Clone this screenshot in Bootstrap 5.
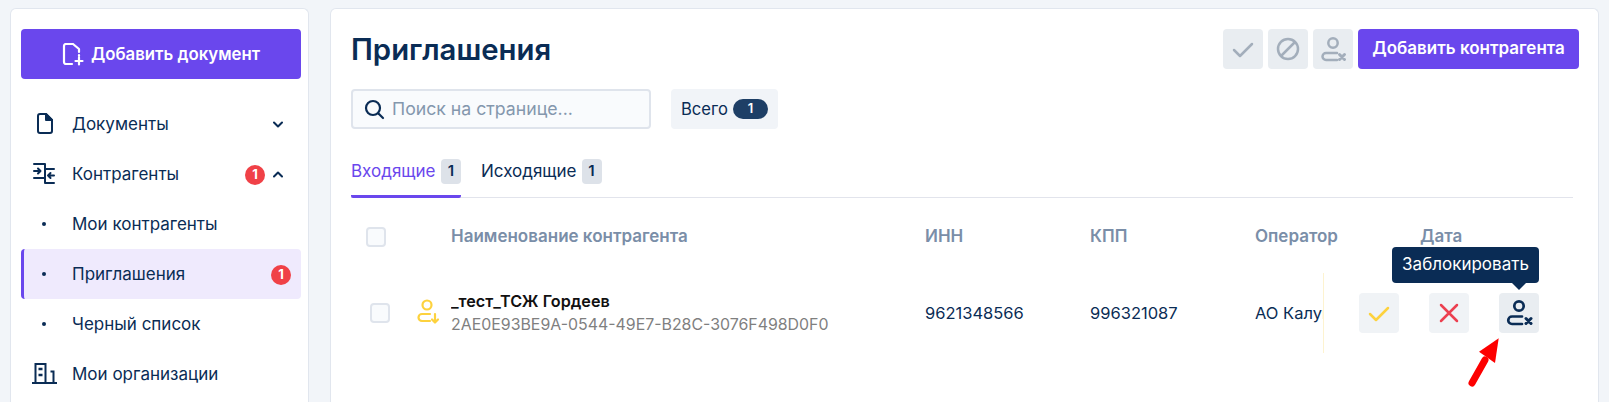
<!DOCTYPE html>
<html lang="ru">
<head>
  <meta charset="UTF-8">
  <title>Приглашения</title>
  <link href="https://cdn.jsdelivr.net/npm/bootstrap@5.3.3/dist/css/bootstrap.min.css" rel="stylesheet">
  <style>
    html, body { height: 100%; overflow: hidden; }
    body { background: #f2f5f9; font-family: Inter, "Noto Sans", sans-serif; font-size: 17px; color: #0a2c55; }
    .page-wrap { height: 100vh; padding: 8px 10px 0; gap: 21px; }
    .panel { background: #fff; border: 1px solid #e1e6ee; border-bottom: 0; border-radius: 6px 6px 0 0; }
    .side-panel { width: 299px; flex: none; padding: 20px 7px 0 10px; }
    .main-panel { width: 1269px; flex: none; padding: 20px 19px 0 20px; }
    .btn-violet { background: #6a47ed; color: #fff; border: 0; border-radius: 4px; font-weight: 600; }
    .btn-violet:hover { background: #6a47ed; color: #fff; }
    .btn-doc { width: 280px; height: 50px; font-size: 16.8px; margin-bottom: 20px; gap: 5px; padding: 1px 0 0; }
    .btn-add { width: 221px; height: 40px; font-size: 17px; margin-left: 5px; padding: 0; white-space: nowrap; }
    .side-item { height: 50px; padding-left: 51px; padding-top: 1px; position: relative; border-radius: 4px; width: 280px; }
    .side-ico { position: absolute; left: 10px; top: 12px; width: 26px; height: 26px; overflow: visible; }
    .side-dot { position: absolute; left: 21px; top: 23px; width: 4px; height: 4px; border-radius: 50%; background: #0a2c55; }
    .side-item.on { background: #efeafd; border-left: 3px solid #6a47ed; padding-left: 48px; }
    .side-item.on .side-dot { left: 18px; }
    .num-red { width: 20px; height: 20px; border-radius: 50%; background: #f04147; color: #fff; font-size: 13px; font-weight: 700; }
    .chev { width: 10px; height: 7px; margin: 0 18px 0 8px; }
    .title-main { font-size: 29.3px; font-weight: 600; margin: 2px 0 0; color: #0a2c55; }
    .ico-btn { width: 40px; height: 40px; border-radius: 4px; background: #e9edf1; border: 0; padding: 0; margin-left: 5px; }
    .search-row { margin-top: 20px; }
    .search-box { width: 300px; height: 40px; border: 2px solid #dfe4ec; background: #f9fbfd; border-radius: 4px; padding-left: 10px; gap: 7px; color: #8497ad; font-size: 17.7px; }
    .total-box { width: 107px; height: 40px; margin-left: 20px; background: #f1f4f8; border-radius: 4px; padding-left: 10px; font-size: 16.6px; }
    .total-num { width: 35px; height: 20px; margin-left: 5px; border-radius: 10px; background: #1e3f66; color: #fff; font-size: 13px; font-weight: 600; }
    .tabs-line { margin-top: 29px; height: 40px; border-bottom: 1px solid #e2e4ec; width: 1222px; }
    .tab-one { height: 40px; padding-bottom: 10px; margin-right: 20px; border-bottom: 3px solid transparent; font-size: 17px; }
    .tab-one.on { width: 110px; justify-content: space-between; color: #6a47ed; border-bottom-color: #6a47ed; border-radius: 0 0 2px 2px; }
    .tab-num { width: 20px; height: 25px; margin-left: 5px; background: #dde2e9; border-radius: 4px; color: #0a2c55; font-weight: 600; font-size: 15px; }
    .data-area { position: relative; width: 1222px; }
    .data-table { table-layout: fixed; width: 1222px; }
    .data-table th, .data-table td { padding: 0; white-space: nowrap; overflow: hidden; vertical-align: middle; font-size: 16.5px; }
    .data-table th { height: 78px; color: #7a8ea8; font-weight: 600; font-size: 17px; }
    .data-table td { height: 74px; }
    .chk-box { width: 20px; height: 20px; border: 2px solid #dfe4ec; border-radius: 4px; background: #f9fbfd; }
    .row-ico { display: block; margin-left: 6px; }
    .name-main { font-weight: 600; color: #111; line-height: 24px; font-size: 16.2px; }
    .name-uuid { color: #7f7f7f; line-height: 24px; font-size: 15.9px; }
    .act-cover { position: absolute; left: 972px; top: 75px; width: 250px; height: 80px; background: #fff; border-left: 1px solid #fdf3d0; padding-left: 35px; gap: 30px; }
    .act-btn { width: 40px; height: 40px; border: 0; padding: 0; border-radius: 4px; background: #f0f3f6; }
    .act-btn.dark { background: #e9edf1; }
    .act-btn svg, .ico-btn svg { display: block; }
    .tip-box { position: absolute; left: 1041px; top: 49px; width: 147px; height: 36px; background: #0a2c55; color: #fff; border-radius: 4px; }
    .tip-box::after { content: ""; position: absolute; left: 120px; top: 36px; border: 7px solid transparent; border-top-color: #0a2c55; border-bottom: 0; }
    .red-arrow { position: absolute; left: 1109px; top: 132px; width: 50px; height: 66px; }
  </style>
</head>
<body>
<div class="page-wrap d-flex">
  <aside class="panel side-panel">
    <button class="btn btn-violet btn-doc d-flex align-items-center justify-content-center">
      <svg width="24" height="24" viewBox="0 0 24 24" fill="none" stroke="#fff" stroke-width="2.200" stroke-linecap="round" stroke-linejoin="round"><path d="M10 21H4a2 2 0 0 1-2-2V3a2 2 0 0 1 2-2h7l6 5v3M17 12v1"/><path d="M17 14.500v7M13.500 18h7"/></svg>
      Добавить документ
    </button>
    <div class="side-item d-flex align-items-center">
      <svg class="side-ico" viewBox="0 0 26 26" fill="none" stroke="#0a2c55" stroke-width="2" stroke-linejoin="round"><path d="M9 3h6l6 6v11a2 2 0 0 1-2 2H9a2 2 0 0 1-2-2V5a2 2 0 0 1 2-2z"/><path d="M15 3l6 6h-6z" fill="#0a2c55"/></svg>
      <span class="flex-grow-1">Документы</span>
      <svg class="chev" viewBox="0 0 10 7" fill="none" stroke="#0a2c55" stroke-width="2" stroke-linecap="round" stroke-linejoin="round"><path d="M1 1.500l4 4 4-4"/></svg>
    </div>
    <div class="side-item d-flex align-items-center">
      <svg class="side-ico" viewBox="0 0 26 26" fill="none" stroke="#0a2c55" stroke-width="2" stroke-linecap="round" stroke-linejoin="round"><path d="M3 3h11v19h9M14 8h9M3 17h11M3 10h6M7 7.500l2.500 2.500L7 12.500M23 14.500h-6M19.500 12L17 14.500l2.500 2.500"/></svg>
      <span class="flex-grow-1">Контрагенты</span>
      <span class="num-red d-flex align-items-center justify-content-center">1</span>
      <svg class="chev" viewBox="0 0 10 7" fill="none" stroke="#0a2c55" stroke-width="2" stroke-linecap="round" stroke-linejoin="round"><path d="M1 5.500l4-4 4 4"/></svg>
    </div>
    <div class="side-item d-flex align-items-center"><i class="side-dot"></i><span>Мои контрагенты</span></div>
    <div class="side-item on d-flex align-items-center"><i class="side-dot"></i><span class="flex-grow-1">Приглашения</span><span class="num-red d-flex align-items-center justify-content-center" style="margin-right:10px">1</span></div>
    <div class="side-item d-flex align-items-center"><i class="side-dot"></i><span>Черный список</span></div>
    <div class="side-item d-flex align-items-center">
      <svg class="side-ico" viewBox="0 0 26 26" fill="none" stroke="#0a2c55" stroke-width="2"><path d="M1 22h25M4.500 22V3h10v19M22.500 22V10.500h-3"/><path d="M7.500 8h4M7.500 14h4" stroke-width="2.500"/></svg>
      <span>Мои организации</span>
    </div>
  </aside>

  <main class="panel main-panel">
    <div class="d-flex align-items-center justify-content-between">
      <h1 class="title-main">Приглашения</h1>
      <div class="d-flex">
        <button class="ico-btn"><svg width="40" height="40" viewBox="0 0 40 40" fill="none" stroke="#a3aebb" stroke-width="2.500" stroke-linecap="round" stroke-linejoin="round"><path d="M11 21l6 6 12-12"/></svg></button>
        <button class="ico-btn"><svg width="40" height="40" viewBox="0 0 40 40" fill="none" stroke="#a3aebb" stroke-width="2.500"><circle cx="20" cy="20" r="10"/><path d="M13 27l14-14"/></svg></button>
        <button class="ico-btn"><svg width="40" height="40" viewBox="0 0 40 40" fill="none" stroke="#a3aebb" stroke-width="2.500" stroke-linecap="round"><circle cx="20" cy="14" r="4.700"/><path d="M24 24H13a3.500 3.500 0 0 0 0 7h11"/><path d="M26.500 25.500l5 5M31.500 25.500l-5 5" stroke-width="3"/></svg></button>
        <button class="btn btn-violet btn-add">Добавить контрагента</button>
      </div>
    </div>

    <div class="search-row d-flex">
      <div class="search-box d-flex align-items-center">
        <svg width="22" height="22" viewBox="0 0 22 22" fill="none" stroke="#0a2c55" stroke-width="2.200" stroke-linecap="round"><circle cx="10" cy="10" r="7"/><path d="M15.500 15.500L20 20"/></svg>
        <span>Поиск на странице...</span>
      </div>
      <div class="total-box d-flex align-items-center">Всего<span class="total-num d-flex align-items-center justify-content-center">1</span></div>
    </div>

    <div class="tabs-line d-flex">
      <div class="tab-one on d-flex align-items-center">Входящие<span class="tab-num d-flex align-items-center justify-content-center">1</span></div>
      <div class="tab-one d-flex align-items-center">Исходящие<span class="tab-num d-flex align-items-center justify-content-center">1</span></div>
    </div>

    <div class="data-area">
      <table class="data-table">
        <colgroup><col style="width:55px"><col style="width:45px"><col style="width:474px"><col style="width:165px"><col style="width:165px"><col style="width:165px"><col style="width:153px"></colgroup>
        <thead>
          <tr>
            <th><div class="chk-box" style="margin-left:15px"></div></th>
            <th></th>
            <th>Наименование контрагента</th>
            <th>ИНН</th>
            <th>КПП</th>
            <th>Оператор</th>
            <th>Дата</th>
          </tr>
        </thead>
        <tbody>
          <tr>
            <td><div class="chk-box" style="margin-left:19px"></div></td>
            <td><svg class="row-ico" width="36" height="36" viewBox="0 0 36 36" fill="none" stroke="#fdd23e" stroke-width="2.200" stroke-linecap="round" stroke-linejoin="round"><circle cx="15" cy="10" r="4.500"/><path d="M18 19H10a3.500 3.500 0 0 0 0 7h8M23 19v8M20 24.500l3 3 3-3"/></svg></td>
            <td><div class="name-main">_тест_ТСЖ Гордеев</div><div class="name-uuid">2AE0E93BE9A-0544-49E7-B28C-3076F498D0F0</div></td>
            <td>9621348566</td>
            <td>996321087</td>
            <td>АО Калуга Астрал</td>
            <td></td>
          </tr>
        </tbody>
      </table>
      <div class="act-cover d-flex align-items-center">
        <button class="act-btn"><svg width="40" height="40" viewBox="0 0 40 40" fill="none" stroke="#fdd23e" stroke-width="2.500" stroke-linecap="round" stroke-linejoin="round"><path d="M11 21l6 6 12-12"/></svg></button>
        <button class="act-btn"><svg width="40" height="40" viewBox="0 0 40 40" fill="none" stroke="#ec4050" stroke-width="2.500" stroke-linecap="round"><path d="M12 12l16 16M28 12L12 28"/></svg></button>
        <button class="act-btn dark"><svg width="40" height="40" viewBox="0 0 40 40" fill="none" stroke="#0a2c55" stroke-width="2.700" stroke-linecap="round"><circle cx="20" cy="13" r="4.700"/><path d="M23 23.500H13a3.700 3.700 0 0 0 0 7.500h10"/><path d="M27 25.500l5 5M32 25.500l-5 5" stroke-width="3"/></svg></button>
      </div>
      <div class="tip-box d-flex align-items-center justify-content-center">Заблокировать</div>
      <svg class="red-arrow" viewBox="0 0 50 66"><path d="M12 53L25 30" stroke="#fd0000" stroke-width="7" stroke-linecap="round"/><path d="M38.700 8.300L35 33L19 21.700z" fill="#fd0000"/></svg>
    </div>
  </main>
</div>
<script src="https://cdn.jsdelivr.net/npm/bootstrap@5.3.3/dist/js/bootstrap.bundle.min.js"></script>
</body>
</html>
